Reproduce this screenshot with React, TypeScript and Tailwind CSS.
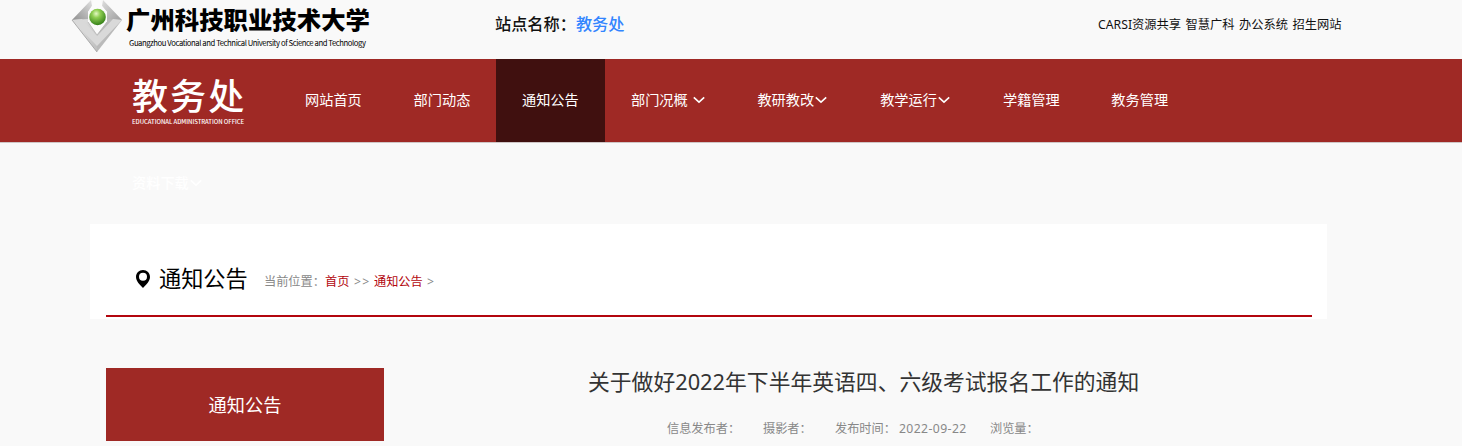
import React from 'react';
import { clsx } from 'clsx';

interface NavItem {
    label: string;
    width: string;
    active?: boolean;
    hasMenu?: boolean;
    spaced?: boolean;
}

const navItems: NavItem[] = [
    { label: '网站首页', width: 'w-[108.6px]' },
    { label: '部门动态', width: 'w-[108.4px]' },
    { label: '通知公告', width: 'w-[109px]', active: true },
    { label: '部门况概', width: 'w-[126.4px]', hasMenu: true, spaced: true },
    { label: '教研教改', width: 'w-[122.8px]', hasMenu: true },
    { label: '教学运行', width: 'w-[122.8px]', hasMenu: true },
    { label: '学籍管理', width: 'w-[108.4px]' },
    { label: '教务管理', width: 'w-[109px]' }
];

const topLinks = ['CARSI资源共享', '智慧广科', '办公系统', '招生网站'];

function Chevron({ className }: { className?: string }) {
    return (
        <svg viewBox="0 0 14 10" className={clsx('w-[14px] h-[10px] shrink-0', className)} fill="none">
            <path d="M1.8 2.4 L7 7.2 L12.2 2.4" stroke="currentColor" strokeWidth="1.6" />
        </svg>
    );
}

function Emblem() {
    return (
        <svg viewBox="0 0 52 54" className="w-[52px] h-[54px] shrink-0">
            <defs>
                <linearGradient id="left" x1="0" y1="1" x2="1" y2="0">
                    <stop offset="0" stopColor="#8c8c8c" />
                    <stop offset="0.5" stopColor="#b4b4b4" />
                    <stop offset="1" stopColor="#e2e2e2" />
                </linearGradient>
                <linearGradient id="right" x1="0" y1="0" x2="1" y2="1">
                    <stop offset="0" stopColor="#dedede" />
                    <stop offset="1" stopColor="#9a9a9a" />
                </linearGradient>
                <linearGradient id="base" x1="0" y1="0" x2="1" y2="1">
                    <stop offset="0" stopColor="#e6e6e6" />
                    <stop offset="1" stopColor="#bdbdbd" />
                </linearGradient>
                <radialGradient id="ball" cx="0.42" cy="0.3" r="0.7">
                    <stop offset="0" stopColor="#e4f8c4" />
                    <stop offset="0.35" stopColor="#8fce52" />
                    <stop offset="1" stopColor="#347f18" />
                </radialGradient>
            </defs>
            <path d="M20 0 L1 20 L17 22 L17 12 L21 6 Z" fill="url(#left)" />
            <path d="M32 0 L51 20 L36 22 L36 12 L31 6 Z" fill="url(#right)" />
            <path d="M1 20 L17 19 L26 35 L26 52 Z" fill="url(#base)" />
            <path d="M51 20 L36 19 L26 35 L26 52 Z" fill="#bababa" />
            <path d="M1 20 L11 19 L26 36 L42 19 L51 20 L26 46 Z" fill="#d9d9d9" />
            <path d="M22 0 L30 0 L31 6 L36 12 L36 22 L26 35 L17 22 L17 12 L21 6 Z" fill="#fbfbfb" />
            <path d="M17 22 L26 35 L36 22" fill="none" stroke="#b4b4b4" strokeWidth="0.8" />
            <path d="M1 20 L26 52" stroke="#9c9c9c" strokeWidth="0.8" />
            <circle cx="26.5" cy="17" r="8.3" fill="url(#ball)" />
        </svg>
    );
}

function TopBar() {
    return (
        <header className="h-[59px] flex items-start pl-[71px] bg-[#f9f9f9]">
            <Emblem />
            <div className="w-[372px] pt-[3px] pl-[3px] text-black font-['Noto_Sans_CJK_SC',sans-serif]">
                <div className="text-[24.4px] leading-[32px] font-black whitespace-nowrap">广州科技职业技术大学</div>
                <div className="pl-[3px] text-[7.7px] leading-[12px] tracking-[-0.42px] mt-[2px] whitespace-nowrap">
                    Guangzhou Vocational and Technical University of Science and Technology
                </div>
            </div>
            <div className="w-[603px] text-[16.2px] leading-[24px] pt-[12px] font-medium text-[#111] whitespace-nowrap">
                站点名称：<span className="text-[#3385ff]">教务处</span>
            </div>
            <nav className="flex gap-[4.5px] pt-[15px] text-[12.25px] leading-[20px] text-[#111] whitespace-nowrap">
                {topLinks.map(link => (
                    <a key={link} href="#">{link}</a>
                ))}
            </nav>
        </header>
    );
}

function MainNav() {
    return (
        <div className="h-[84px] bg-[#9f2925] border-b border-[#cfc6c6] flex pl-[132px] text-white">
            <div className="w-[147px] pt-[17px] whitespace-nowrap font-['Noto_Sans_CJK_SC',sans-serif]">
                <div className="text-[36px] leading-[36px] font-medium tracking-[2.1px]">教务处</div>
                <div className="mt-[5.5px] text-[6px] leading-[8px] font-medium tracking-[-0.06px]">EDUCATIONAL ADMINISTRATION OFFICE</div>
            </div>
            {navItems.map(item => (
                <a
                    key={item.label}
                    href="#"
                    className={clsx(
                        'h-[83px] flex items-center pl-[26px] pb-[2px] text-[14.2px] leading-[20px] whitespace-nowrap',
                        item.width,
                        item.active && 'bg-[#40100f]'
                    )}
                >
                    {item.label}
                    {item.hasMenu && <Chevron className={item.spaced ? 'ml-[4px]' : ''} />}
                </a>
            ))}
        </div>
    );
}

export default function App() {
    return (
        <div className="w-[1462px] h-[446px] overflow-hidden bg-[#f9f9f9] font-['Noto_Sans','Noto_Sans_CJK_SC',sans-serif]">
            <TopBar />
            <MainNav />

            {/* Wrapped nav entry */}
            <div className="h-[81px] pb-[2px] flex items-center pl-[132px] text-white text-[14.2px] leading-[20px] font-medium">
                资料下载<Chevron />
            </div>

            {/* Breadcrumb */}
            <section className="w-[1237px] h-[95px] ml-[90px] px-[16px] bg-white">
                <div className="h-[93px] w-[1206px] border-b-2 border-[#b3060e] flex items-start pl-[30px] whitespace-nowrap">
                    <svg viewBox="0 0 14 18" className="w-[14px] h-[18px] mt-[46px]">
                        <path fillRule="evenodd" fill="#000" d="M7 0 C3 0 0 3 0 7 C0 11 4 15 7 18 C10 15 14 11 14 7 C14 3 11 0 7 0 Z M7 2.8 A4 4 0 1 1 7 10.8 A4 4 0 1 1 7 2.8 Z" />
                    </svg>
                    <h2 className="w-[114px] pl-[9px] pt-[39px] text-[22.2px] leading-[32px] text-black">通知公告</h2>
                    <div className="flex pt-[48px] text-[12.2px] leading-[20px] text-[#888]">
                        <span className="w-[61px]">当前位置：</span>
                        <a href="#" className="w-[29px] text-[#b3060e]">首页</a>
                        <span className="w-[20px] tracking-[1.2px]">&gt;&gt;</span>
                        <a href="#" className="w-[53px] text-[#b3060e]">通知公告</a>
                        <span>&gt;</span>
                    </div>
                </div>
            </section>

            <main className="flex items-start pt-[49px] pl-[106px]">
                <aside className="w-[278px] h-[73px] pt-px bg-[#9f2925] flex items-center justify-center text-white text-[18.2px] leading-[26px]">
                    通知公告
                </aside>
                <article className="pl-[204px] -mt-px whitespace-nowrap">
                    <h1 className="text-[21.8px] leading-[30px] text-[#333]">关于做好2022年下半年英语四、六级考试报名工作的通知</h1>
                    <div className="flex pl-[79px] pt-[22px] text-[12.2px] leading-[20px] text-[#888]">
                        <span className="w-[96px]">信息发布者：</span>
                        <span className="w-[72px]">摄影者：</span>
                        <span className="w-[64px]">发布时间：</span>
                        <span className="w-[91px] tracking-[0.4px]">2022-09-22</span>
                        <span>浏览量：</span>
                    </div>
                </article>
            </main>
        </div>
    );
}
